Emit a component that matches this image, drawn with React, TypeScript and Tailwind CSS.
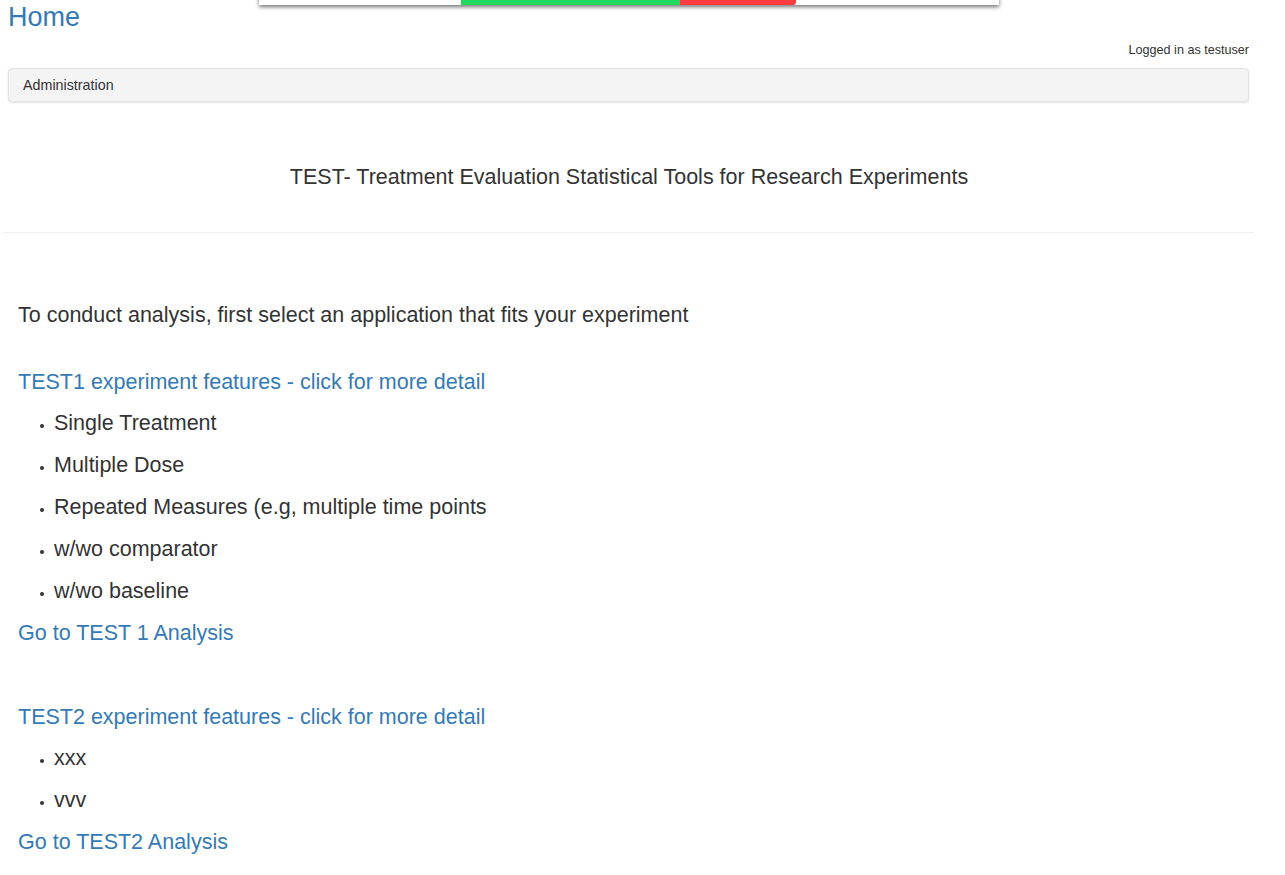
import React from "react";

function Item({ children }: { children: React.ReactNode }) {
  return (
    <li className="flex items-center h-[42px] pl-[22px]">
      <span className="w-[4px] h-[4px] rounded-full bg-[#333] translate-y-[3px] mr-[10px]" />
      <span className="text-[21.5px] leading-[42px] text-[#333]">{children}</span>
    </li>
  );
}

function Link({ children }: { children: React.ReactNode }) {
  return (
    <a href="#" className="block text-[21.5px] leading-[42px] text-[#337ab7] no-underline">
      {children}
    </a>
  );
}

export default function App() {
  return (
    <div className="relative min-h-[875px] bg-white text-[#333]" style={{ fontFamily: '"Liberation Sans", Arial, sans-serif' }}>
      {/* floating toolbar overlay */}
      <div className="absolute left-[259px] top-[-20px] w-[740px] h-[25px] bg-white shadow-[0_2px_4px_rgba(0,0,0,0.55)] z-10">
        <div className="absolute left-[202px] top-0 w-[219px] h-full bg-[#22d95f]" />
        <div className="absolute left-[421px] top-0 w-[116px] h-full bg-[#fd3a3d] rounded-br-[3px]" />
      </div>

      <div className="pl-2 pr-[36px]">
        <div className="h-[34px]">
          <a href="#" className="text-[27px] leading-[34px] text-[#337ab7]">Home</a>
        </div>
        <div className="mt-[7px] h-[18px] text-right text-[12.6px] leading-[18px] text-[#333]">Logged in as testuser</div>
        <div className="mt-[9px] h-[34px] bg-[#f4f4f4] border border-[#e3e3e3] rounded-[4px] shadow-[0_1px_2px_rgba(0,0,0,0.12)] flex items-center pl-[14px] pt-[1px]">
          <span className="text-[14.3px] text-[#333]">Administration</span>
        </div>
      </div>

      <h1 className="mt-[60px] text-center text-[21.5px] leading-[30px] font-normal text-[#333] pr-[27px]">
        TEST- Treatment Evaluation Statistical Tools for Research Experiments
      </h1>

      <div className="mt-[40px] ml-1 mr-[31px] border-t border-[#eeeeee]" />

      <div className="pl-[18px]">
        <p className="mt-[67px] text-[21.5px] leading-[30px] text-[#333]">
          To conduct analysis, first select an application that fits your experiment
        </p>

        <div className="mt-[31px]">
          <Link>TEST1 experiment features - click for more detail</Link>
          <ul className="mt-[-1px]">
            <Item>Single Treatment</Item>
            <Item>Multiple Dose</Item>
            <Item>Repeated Measures (e.g, multiple time points</Item>
            <Item>w/wo comparator</Item>
            <Item>w/wo baseline</Item>
          </ul>
          <Link>Go to TEST 1 Analysis</Link>
        </div>

        <div className="mt-[42px]">
          <Link>TEST2 experiment features - click for more detail</Link>
          <ul className="mt-[-1px]">
            <Item>xxx</Item>
            <Item>vvv</Item>
          </ul>
          <Link>Go to TEST2 Analysis</Link>
        </div>
      </div>
    </div>
  );
}
